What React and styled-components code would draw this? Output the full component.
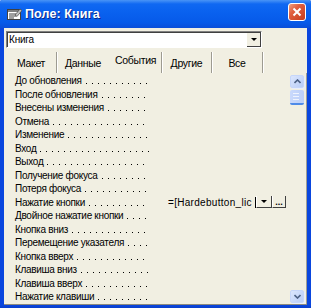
import React from 'react';
import styled, { createGlobalStyle } from 'styled-components';

const GlobalStyle = createGlobalStyle`
  html, body {
    margin: 0;
    padding: 0;
    overflow: hidden;
  }
  body {
    font-family: "Liberation Sans", Arial, sans-serif;
    font-size: 10px;
  }
`;

const Window = styled.div`
  width: 311px;
  height: 308px;
  box-sizing: border-box;
  display: flex;
  flex-direction: column;
  background: #0a46de;
  border-radius: 2px 2px 0 0;
  overflow: hidden;
`;

const TitleBar = styled.div`
  height: 28px;
  flex: none;
  display: flex;
  align-items: center;
  padding: 0 5px 0 7px;
  background: linear-gradient(#4a94f6 0, #1068f2 4px, #0a62ef 40%, #065ae9 80%, #0a4ed9 100%);
`;

const TitleIcon = styled.svg`
  width: 15px;
  height: 12px;
  margin-right: 3px;
  flex: none;
`;

const TitleText = styled.div`
  flex: 1;
  color: #fff;
  font-weight: bold;
  font-size: 12.5px;
  text-shadow: 1px 1px 0 #0a2a8a;
  letter-spacing: 0.1px;
`;

const CloseButton = styled.div`
  width: 16px;
  height: 16px;
  border: 1px solid #fff;
  border-radius: 3px;
  background: linear-gradient(135deg, #f0a080 0, #e06040 35%, #c63c1c 100%);
  display: flex;
  align-items: center;
  justify-content: center;
  margin-top: -4px;
`;

const Body = styled.div`
  flex: 1;
  margin: 0 4px 0 4px;
  background: #f1efe2;
  display: flex;
  flex-direction: column;
  padding-top: 3px;
  border-bottom: 1px solid #8c8a7e;
`;

const FrameBottom = styled.div`
  height: 6px;
  flex: none;
  background: linear-gradient(#0a46de, #0838b8);
`;

const Combo = styled.div`
  margin-left: 2px;
  width: 256px;
  height: 17px;
  box-sizing: border-box;
  background: #fff;
  border-top: 1px solid #808080;
  border-left: 1px solid #808080;
  border-right: 1px solid #fff;
  border-bottom: 1px solid #fff;
  box-shadow: inset 1px 1px 0 #404040;
  display: flex;
  align-items: center;
`;

const ComboText = styled.div`
  flex: 1;
  padding-left: 2px;
  font-size: 10px;
  letter-spacing: -0.2px;
  color: #000;
`;

const ComboButton = styled.div`
  width: 14px;
  height: 14px;
  box-sizing: border-box;
  background: #f1efe2;
  border-right: 1px solid #404040;
  border-bottom: 1px solid #404040;
  display: flex;
  align-items: center;
  justify-content: center;
`;

const Arrow = styled.div`
  width: 0;
  height: 0;
  border-left: 3px solid transparent;
  border-right: 3px solid transparent;
  border-top: 3px solid #000;
`;

const Tabs = styled.div`
  display: flex;
  height: 21px;
  margin-top: 4px;
  margin-left: 2px;
`;

const Tab = styled.div`
  width: ${p => p.w}px;
  box-sizing: border-box;
  display: flex;
  justify-content: center;
  padding-top: ${p => (p.active ? 2 : 5)}px;
  font-size: 10.5px;
  letter-spacing: -0.3px;
  color: #000;
  border-right: 1px solid ${p => (p.hideEdge ? 'transparent' : '#9d9b91')};
  box-shadow: ${p => (p.hideEdge ? 'none' : '1px 0 0 #ffffff')};
`;

const ListArea = styled.div`
  flex: 1;
  display: flex;
  border-right: 1px solid #a09e94;
`;

const Rows = styled.div`
  flex: 1;
  padding-top: 1px;
`;

const Row = styled.div`
  height: 13.5px;
  display: flex;
  align-items: center;
`;

const Label = styled.div`
  width: 145px;
  flex: none;
  display: flex;
  align-items: baseline;
  padding-left: 11px;
  box-sizing: border-box;
  font-size: 10px;
  letter-spacing: -0.3px;
  color: #000;
  white-space: nowrap;
  overflow: hidden;
`;

const Leader = styled.span`
  flex: 1;
  height: 8px;
  margin-left: 2px;
  background-image: linear-gradient(to right, #000 1px, transparent 1px);
  background-size: 6px 1px;
  background-repeat: repeat-x;
  background-position: 2px bottom;
`;

const Value = styled.div`
  display: flex;
  align-items: center;
  margin-left: 19px;
`;

const ValueText = styled.div`
  width: 87px;
  font-size: 10px;
  letter-spacing: 0.3px;
  color: #000;
  white-space: nowrap;
  overflow: hidden;
  border-right: 1px solid #000;
`;

const SmallButton = styled.div`
  width: ${p => p.w}px;
  height: 12px;
  box-sizing: border-box;
  background: #f1efe2;
  border-right: 1px solid #404040;
  border-bottom: 1px solid #404040;
  border-left: 1px solid #fff;
  display: flex;
  align-items: center;
  justify-content: center;
  font-size: 9px;
  font-weight: bold;
  line-height: 6px;
`;

const ScrollBar = styled.div`
  width: 15px;
  margin-right: 1px;
  display: flex;
  flex-direction: column;
  padding: 2px 0 1px;
`;

const ScrollBtn = styled.div`
  width: 14px;
  height: 13px;
  box-sizing: border-box;
  border-radius: 2px;
  background: linear-gradient(135deg, #dbe6fd, #b9cdf7);
  border: 1px solid #c6d6fa;
  box-shadow: 1px 1px 0 #e8eefc;
  display: flex;
  align-items: center;
  justify-content: center;
`;

const Thumb = styled.div`
  width: 14px;
  height: 15px;
  margin-top: 2px;
  box-sizing: border-box;
  border-radius: 2px;
  background: linear-gradient(to right, #c9d9fc, #bccff8);
  border-bottom: 2px solid #4f8be8;
  display: flex;
  flex-direction: column;
  justify-content: center;
  gap: 2px;
  padding: 0 3px;
`;

const Grip = styled.div`
  height: 1px;
  width: 6px;
  background: #eef3fe;
`;

const Spacer = styled.div`
  flex: 1;
`;

const events = [
  'До обновления',
  'После обновления',
  'Внесены изменения',
  'Отмена',
  'Изменение',
  'Вход',
  'Выход',
  'Получение фокуса',
  'Потеря фокуса',
  'Нажатие кнопки',
  'Двойное нажатие кнопки',
  'Кнопка вниз',
  'Перемещение указателя',
  'Кнопка вверх',
  'Клавиша вниз',
  'Клавиша вверх',
  'Нажатие клавиши',
];

const tabs = [
  { label: 'Макет', w: 51 },
  { label: 'Данные', w: 53, hideEdge: true },
  { label: 'События', w: 52, active: true },
  { label: 'Другие', w: 50 },
  { label: 'Все', w: 51 },
];

const App = () => (
  <>
    <GlobalStyle />
    <Window>
      <TitleBar>
        <TitleIcon viewBox="0 0 15 12">
          <rect x="0.5" y="1.5" width="13" height="10" fill="#fff" stroke="#404040" />
          <rect x="1" y="2" width="12" height="2" fill="#808080" />
          <line x1="2" y1="6" x2="9" y2="6" stroke="#404040" />
          <line x1="2" y1="8" x2="9" y2="8" stroke="#404040" />
          <line x1="2" y1="10" x2="7" y2="10" stroke="#404040" />
          <path d="M8 7 L13 1 L15 2.5 L10 8.5 Z" fill="#c0c0c0" stroke="#303030" strokeWidth="0.6" />
        </TitleIcon>
        <TitleText>Поле: Книга</TitleText>
        <CloseButton>
          <svg width="10" height="10" viewBox="0 0 10 10">
            <path d="M1.5 1.5 L8.5 8.5 M8.5 1.5 L1.5 8.5" stroke="#fff" strokeWidth="2" />
          </svg>
        </CloseButton>
      </TitleBar>
      <Body>
        <Combo>
          <ComboText>Книга</ComboText>
          <ComboButton><Arrow /></ComboButton>
        </Combo>
        <Tabs>
          {tabs.map(t => (
            <Tab key={t.label} w={t.w} active={t.active} hideEdge={t.hideEdge}>{t.label}</Tab>
          ))}
        </Tabs>
        <ListArea>
          <Rows>
            {events.map(e => (
              <Row key={e}>
                <Label>{e}<Leader /></Label>
                {e === 'Нажатие кнопки' && (
                  <Value>
                    <ValueText>=[Hardebutton_lic</ValueText>
                    <SmallButton w={16}><Arrow /></SmallButton>
                    <SmallButton w={14}>...</SmallButton>
                  </Value>
                )}
              </Row>
            ))}
          </Rows>
          <ScrollBar>
            <ScrollBtn>
              <svg width="7" height="5" viewBox="0 0 7 5">
                <path d="M0.5 4 L3.5 1 L6.5 4" stroke="#4d6185" strokeWidth="1.6" fill="none" />
              </svg>
            </ScrollBtn>
            <Thumb>
              <Grip /><Grip /><Grip />
            </Thumb>
            <Spacer />
            <ScrollBtn>
              <svg width="7" height="5" viewBox="0 0 7 5">
                <path d="M0.5 1 L3.5 4 L6.5 1" stroke="#4d6185" strokeWidth="1.6" fill="none" />
              </svg>
            </ScrollBtn>
          </ScrollBar>
        </ListArea>
      </Body>
      <FrameBottom />
    </Window>
  </>
);

export default App;
